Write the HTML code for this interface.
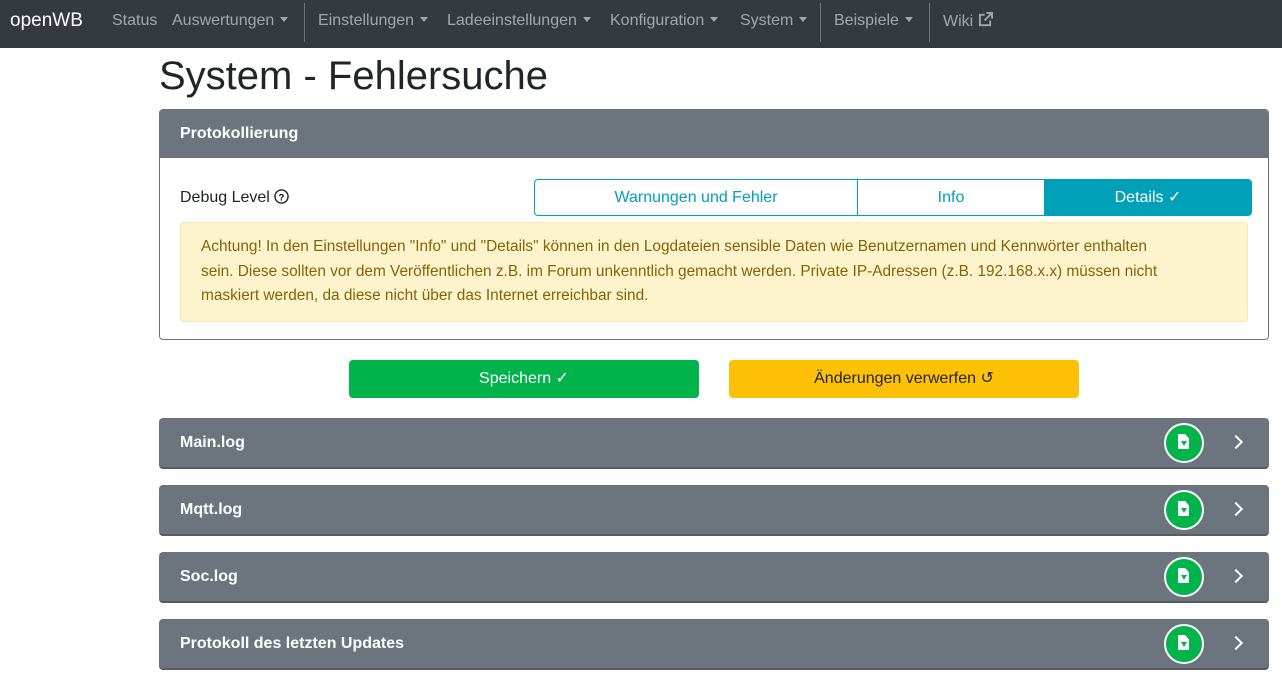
<!DOCTYPE html><html><head><style>
body{margin:0;width:1282px;height:678px;overflow:hidden;font-family:"Liberation Sans",sans-serif;background:#fff;color:#212529}
.nav{position:absolute;left:0;top:0;width:1282px;height:48px;background:#343a40;color:rgba(255,255,255,.55);font-size:16px}
.nav span{position:absolute;top:12px}
.sep{position:absolute;top:3px;width:1px;height:39px;background:rgba(255,255,255,.3)}
.c{display:inline-block;border-top:5px solid rgba(255,255,255,.55);border-left:4px solid transparent;border-right:4px solid transparent;vertical-align:3px;margin-left:6px}
h1{position:absolute;left:159px;top:54px;margin:0;font-weight:400;font-size:40px}
.card{position:absolute;left:159px;width:1108px;border:1px solid #6c757d;border-radius:4px}
.hd{background:#6c757d;color:#fff;font-weight:bold;font-size:16px;height:48px;line-height:48px;padding-left:20px;border-radius:3px 3px 0 0}
.log{position:absolute;left:159px;width:1110px;height:51px;background:#6c757d;border-radius:4px;border-bottom:2px solid #555c62;box-sizing:border-box;color:#fff;font-weight:bold;font-size:16px;line-height:49px;padding-left:21px}
.circ{position:absolute;left:1005px;top:5px;width:36px;height:36px;border:2px solid #fff;border-radius:50%;background:#00b34a}
.chev{position:absolute;left:1072px;top:19px;width:8px;height:8px;border-top:2px solid #fff;border-right:2px solid #fff;transform:rotate(45deg)}
.btn{position:absolute;top:360px;width:350px;height:38px;border-radius:4px;text-align:center;line-height:38px;font-size:16px}
</style></head><body>
<div class="nav">
<span style="left:10px;top:10px;font-size:19px;color:#fff">openWB</span>
<span style="left:112px">Status</span>
<span style="left:172px">Auswertungen<i class="c"></i></span>
<div class="sep" style="left:304px"></div>
<span style="left:318px">Einstellungen<i class="c"></i></span>
<span style="left:447px">Ladeeinstellungen<i class="c"></i></span>
<span style="left:610px">Konfiguration<i class="c"></i></span>
<span style="left:740px">System<i class="c"></i></span>
<div class="sep" style="left:820px"></div>
<span style="left:834px">Beispiele<i class="c"></i></span>
<div class="sep" style="left:929px"></div>
<span style="left:943px">Wiki <svg width="15" height="15" viewBox="0 0 16 16" style="vertical-align:-1px"><path d="M7 3H2v11h11V9M9 1h6v6M15 1L7 9" fill="none" stroke="rgba(255,255,255,.55)" stroke-width="2"/></svg></span>
</div>
<h1>System - Fehlersuche</h1>
<div class="card" style="top:109px;height:229px">
<div class="hd">Protokollierung</div>
<div style="position:absolute;left:20px;top:79px;font-size:16px">Debug Level <svg width="15" height="15" viewBox="0 0 16 16" style="vertical-align:-2px"><circle cx="8" cy="8" r="7" fill="none" stroke="#212529" stroke-width="1.5"/><text x="8" y="12" font-size="10" text-anchor="middle" font-weight="bold" font-family="Liberation Sans">?</text></svg></div>
<div style="position:absolute;left:374px;top:69px;width:716px;height:35px;border:1px solid #00a0b8;border-radius:4px;display:flex;color:#00a0b8;font-size:16px;line-height:36px;text-align:center;overflow:hidden">
<div style="width:322px;border-right:1px solid #00a0b8">Warnungen und Fehler</div>
<div style="width:186px;border-right:1px solid #00a0b8">Info</div>
<div style="flex:1;background:#00a0b8;color:#fff">Details ✓</div></div>
<div style="position:absolute;left:20px;top:112px;width:1046px;height:74px;padding:12px 0 12px 20px;background:#fdf3cd;border:1px solid #fce9a9;border-radius:4px;color:#856404;font-size:15.4px;line-height:24.5px"><div style="width:975px">Achtung! In den Einstellungen "Info" und "Details" können in den Logdateien sensible Daten wie Benutzernamen und Kennwörter enthalten sein. Diese sollten vor dem Veröffentlichen z.B. im Forum unkenntlich gemacht werden. Private IP-Adressen (z.B. 192.168.x.x) müssen nicht maskiert werden, da diese nicht über das Internet erreichbar sind.</div></div>
</div>
<div class="btn" style="left:349px;background:#00b34a;color:#fff">Speichern ✓</div>
<div class="btn" style="left:729px;background:#ffc107;color:#212529">Änderungen verwerfen ↺</div>
<div class="log" style="top:418px">Main.log<div class="circ"></div><div class="chev"></div></div>
<div class="log" style="top:485px">Mqtt.log<div class="circ"></div><div class="chev"></div></div>
<div class="log" style="top:552px">Soc.log<div class="circ"></div><div class="chev"></div></div>
<div class="log" style="top:619px">Protokoll des letzten Updates<div class="circ"></div><div class="chev"></div></div>
<style>.circ::after{content:"";position:absolute;left:12px;top:9px;width:11px;height:15px;background:#fff;border-radius:1px;clip-path:polygon(0 0,65% 0,100% 30%,100% 100%,0 100%)}.circ::before{content:"";position:absolute;left:15px;top:16px;border-top:5px solid #00b34a;border-left:3px solid transparent;border-right:3px solid transparent;z-index:2}</style>
</body></html>
